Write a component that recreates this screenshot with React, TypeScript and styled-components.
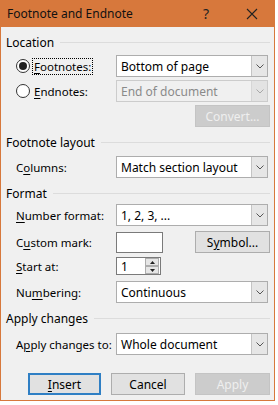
import React from 'react';
import styled, { createGlobalStyle } from 'styled-components';

const GlobalStyle = createGlobalStyle`
  html, body { margin: 0; padding: 0; background: #ffffff; }
  body {
    font-family: "Noto Sans", "Open Sans", sans-serif;
    font-size: 11.5px;
    color: #000;
  }
`;

const Page = styled.div`
  display: flex;
  width: 278px;
  height: 405px;
  overflow: hidden;
`;

const Dialog = styled.div`
  width: 275px;
  height: 401px;
  flex: none;
  box-sizing: border-box;
  border: 1px solid #d7783c;
  border-top: none;
  background: #f0f0f0;
  display: flex;
  flex-direction: column;
`;

const TitleBar = styled.div`
  height: 27px;
  flex: none;
  background: #d7783c;
  display: flex;
  align-items: center;
  padding-left: 7px;
  margin: 0 -1px;
`;

const Title = styled.div`
  flex: 1;
  font-size: 12px;
  color: #111;
`;

const TitleButton = styled.div<{ $w: number }>`
  width: ${(p) => p.$w}px;
  height: 27px;
  display: flex;
  align-items: center;
  justify-content: center;
  color: #222;
  font-size: 14px;
`;

const Body = styled.div`
  display: flex;
  flex-direction: column;
  padding: 0 4px 0 5px;
`;

const SectionHeader = styled.div<{ $mt: number }>`
  display: flex;
  align-items: center;
  gap: 6px;
  height: 15px;
  margin-top: ${(p) => p.$mt}px;
  font-size: 12px;
`;

const SectionLine = styled.div`
  flex: 1;
  height: 1px;
  background: #dcdcdc;
`;

const Row = styled.div<{ $mt: number; $h?: number }>`
  display: flex;
  align-items: center;
  height: ${(p) => p.$h ?? 22}px;
  margin-top: ${(p) => p.$mt}px;
  padding-left: 10px;
`;

const Label = styled.div`
  width: 100px;
  flex: none;
  white-space: nowrap;
`;

const RadioLabel = styled.div`
  width: 100px;
  flex: none;
  display: flex;
  align-items: center;
  gap: 3px;
`;

const RadioCircle = styled.div<{ $checked?: boolean }>`
  width: 12px;
  height: 12px;
  border: 1px solid #333;
  border-radius: 50%;
  background: #fff;
  display: flex;
  align-items: center;
  justify-content: center;
  &::after {
    content: '';
    display: ${(p) => (p.$checked ? 'block' : 'none')};
    width: 8px;
    height: 8px;
    border-radius: 50%;
    background: #222;
  }
`;

const FocusText = styled.span<{ $focus?: boolean }>`
  padding: 0 1px;
  outline: ${(p) => (p.$focus ? '1px dotted #000' : 'none')};
  line-height: 15px;
`;

const U = styled.span`
  text-decoration: underline;
  text-underline-offset: 2px;
`;

const Select = styled.div<{ $disabled?: boolean }>`
  width: 152px;
  height: 22px;
  box-sizing: border-box;
  border: 1px solid ${(p) => (p.$disabled ? '#cccccc' : '#adadad')};
  background: ${(p) => (p.$disabled ? '#f0f0f0' : '#ffffff')};
  color: ${(p) => (p.$disabled ? '#8a8a8a' : '#000')};
  display: flex;
  align-items: center;
  font-size: 12px;
`;

const SelectText = styled.div`
  flex: 1;
  padding-left: 4px;
  white-space: nowrap;
`;

const DropButton = styled.div<{ $disabled?: boolean }>`
  width: 16px;
  height: 20px;
  box-sizing: border-box;
  border-left: 1px solid ${(p) => (p.$disabled ? '#d6d6d6' : '#c4c4c4')};
  background: ${(p) => (p.$disabled ? '#e3e3e3' : '#e6e6e6')};
  display: flex;
  align-items: center;
  justify-content: center;
`;

const ButtonRow = styled.div<{ $mt: number }>`
  display: flex;
  justify-content: flex-end;
  gap: 10px;
  margin-top: ${(p) => p.$mt}px;
`;

const Button = styled.div<{ $w: number; $variant?: 'default' | 'disabled' | 'normal' }>`
  width: ${(p) => p.$w}px;
  height: 22px;
  box-sizing: border-box;
  display: flex;
  align-items: center;
  justify-content: center;
  font-size: 12px;
  background: ${(p) => (p.$variant === 'disabled' ? '#cccccc' : '#e1e1e1')};
  border: ${(p) =>
    p.$variant === 'default'
      ? '2px solid #2f7fc4'
      : p.$variant === 'disabled'
      ? '1px solid #c4c4c4'
      : '1px solid #adadad'};
  color: ${(p) => (p.$variant === 'disabled' ? '#efefef' : '#000')};
`;

const TextBox = styled.div`
  width: 47px;
  height: 21px;
  box-sizing: border-box;
  border: 1px solid #7a7a7a;
  background: #fff;
`;

const Spacer = styled.div`
  flex: 1;
`;

const SpinBox = styled.div`
  width: 45px;
  height: 18px;
  box-sizing: border-box;
  border: 1px solid #7a7a7a;
  background: #fff;
  display: flex;
  align-items: center;
  font-size: 12px;
`;

const SpinValue = styled.div`
  flex: 1;
  padding-left: 4px;
`;

const SpinButtons = styled.div`
  width: 14px;
  height: 16px;
  display: flex;
  flex-direction: column;
  margin-right: 1px;
`;

const SpinButton = styled.div`
  flex: 1;
  box-sizing: border-box;
  border: 1px solid #adadad;
  background: #e6e6e6;
  display: flex;
  align-items: center;
  justify-content: center;
`;

const Chevron = ({ color }: { color: string }) => (
  <svg width="8" height="5" viewBox="0 0 8 5">
    <polyline points="0.5,0.5 4,4 7.5,0.5" fill="none" stroke={color} strokeWidth="1" />
  </svg>
);

const Arrow = ({ up }: { up?: boolean }) => (
  <svg width="5" height="3" viewBox="0 0 5 3">
    <polygon points={up ? '0,3 5,3 2.5,0' : '0,0 5,0 2.5,3'} fill="#222" />
  </svg>
);

const CloseIcon = () => (
  <svg width="12" height="12" viewBox="0 0 12 12">
    <path d="M1 1 L11 11 M11 1 L1 11" stroke="#222" strokeWidth="1.1" />
  </svg>
);

const Dropdown = ({ value, disabled }: { value: string; disabled?: boolean }) => (
  <Select $disabled={disabled}>
    <SelectText>{value}</SelectText>
    <DropButton $disabled={disabled}>
      <Chevron color={disabled ? '#a8a8a8' : '#555'} />
    </DropButton>
  </Select>
);

export default function App() {
  return (
    <Page>
      <GlobalStyle />
      <Dialog>
        <TitleBar>
          <Title>Footnote and Endnote</Title>
          <TitleButton $w={46}>?</TitleButton>
          <TitleButton $w={46}>
            <CloseIcon />
          </TitleButton>
        </TitleBar>
        <Body>
          <SectionHeader $mt={8}>
            Location
            <SectionLine />
          </SectionHeader>
          <Row $mt={5}>
            <RadioLabel>
              <RadioCircle $checked />
              <FocusText $focus>
                <U>F</U>ootnotes:
              </FocusText>
            </RadioLabel>
            <Dropdown value="Bottom of page" />
          </Row>
          <Row $mt={3}>
            <RadioLabel>
              <RadioCircle />
              <FocusText>
                <U>E</U>ndnotes:
              </FocusText>
            </RadioLabel>
            <Dropdown value="End of document" disabled />
          </Row>
          <ButtonRow $mt={3}>
            <Button $w={75} $variant="disabled">
              Convert...
            </Button>
          </ButtonRow>
          <SectionHeader $mt={8}>
            Footnote layout
            <SectionLine />
          </SectionHeader>
          <Row $mt={6}>
            <Label>
              C<U>o</U>lumns:
            </Label>
            <Dropdown value="Match section layout" />
          </Row>
          <SectionHeader $mt={8}>
            Format
            <SectionLine />
          </SectionHeader>
          <Row $mt={3}>
            <Label>
              <U>N</U>umber format:
            </Label>
            <Dropdown value="1, 2, 3, ..." />
          </Row>
          <Row $mt={5} $h={22}>
            <Label>
              C<U>u</U>stom mark:
            </Label>
            <TextBox />
            <Spacer />
            <Button $w={75}>
              S<U>y</U>mbol...
            </Button>
          </Row>
          <Row $mt={3} $h={20}>
            <Label>
              <U>S</U>tart at:
            </Label>
            <SpinBox>
              <SpinValue>1</SpinValue>
              <SpinButtons>
                <SpinButton>
                  <Arrow up />
                </SpinButton>
                <SpinButton>
                  <Arrow />
                </SpinButton>
              </SpinButtons>
            </SpinBox>
          </Row>
          <Row $mt={5}>
            <Label>
              Nu<U>m</U>bering:
            </Label>
            <Dropdown value="Continuous" />
          </Row>
          <SectionHeader $mt={8}>
            Apply changes
            <SectionLine />
          </SectionHeader>
          <Row $mt={7}>
            <Label>
              A<U>p</U>ply changes to:
            </Label>
            <Dropdown value="Whole document" />
          </Row>
          <ButtonRow $mt={18}>
            <Button $w={73} $variant="default">
              <U>I</U>nsert
            </Button>
            <Button $w={74}>Cancel</Button>
            <Button $w={75} $variant="disabled">
              Apply
            </Button>
          </ButtonRow>
        </Body>
      </Dialog>
    </Page>
  );
}
